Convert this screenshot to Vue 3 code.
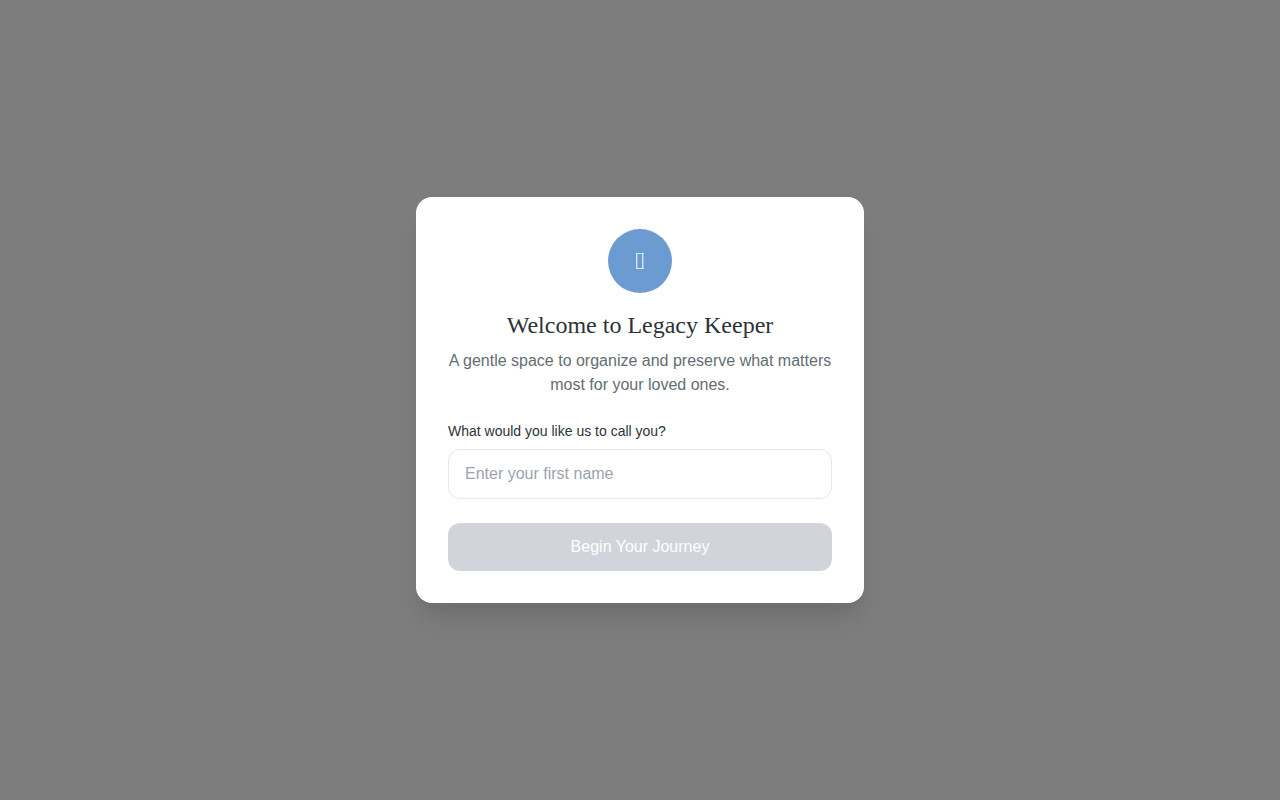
<script setup>
import { ref } from 'vue'

const name = ref('')
</script>

<template>
  <div class="overlay">
    <main class="card">
      <header class="intro">
        <div class="badge">
          <svg class="glyph" viewBox="0 0 24 24" aria-hidden="true">
            <path d="M8 4h8v1H8zM8 19h8v1H8z" fill="#ffffff" fill-opacity="0.75" />
            <path d="M8 5h1v14H8zM14 5h1v14h-1z" fill="#ffffff" fill-opacity="0.7" />
            <path d="M9 5h1v14H9zM15 5h1v14h-1z" fill="#ffffff" fill-opacity="0.3" />
          </svg>
        </div>
        <h1>Welcome to Legacy Keeper</h1>
        <p>A gentle space to organize and preserve what matters most for your loved ones.</p>
      </header>
      <form class="form" @submit.prevent>
        <div class="field">
          <label for="first-name">What would you like us to call you?</label>
          <input id="first-name" v-model="name" type="text" placeholder="Enter your first name" />
        </div>
        <button type="submit" :disabled="!name.trim()">Begin Your Journey</button>
      </form>
    </main>
  </div>
</template>

<style>
body {
  margin: 0;
  background: #ffffff;
}
</style>

<style scoped>
* {
  box-sizing: border-box;
}
.overlay {
  min-height: 100vh;
  display: flex;
  align-items: center;
  justify-content: center;
  padding: 16px;
  background: #7d7d7d;
  font-family: "Liberation Sans", Arial, sans-serif;
  font-size: 16px;
  line-height: 24px;
}
.card {
  width: 100%;
  max-width: 448px;
  padding: 32px;
  border-radius: 16px;
  background: #ffffff;
  box-shadow: 0 20px 25px -5px rgba(0, 0, 0, 0.1), 0 10px 10px -5px rgba(0, 0, 0, 0.04);
}
.intro {
  text-align: center;
  margin-bottom: 24px;
}
.badge {
  width: 64px;
  height: 64px;
  margin: 0 auto 16px;
  border-radius: 50%;
  background: #6b9bd1;
  display: flex;
  align-items: center;
  justify-content: center;
}
.glyph {
  width: 24px;
  height: 24px;
}
h1 {
  margin: 0 0 8px;
  font-family: "Liberation Serif", "Times New Roman", serif;
  font-size: 24px;
  line-height: 32px;
  font-weight: 400;
  color: #2d3436;
}
p {
  margin: 0;
  color: #636e72;
}
.form {
  display: flex;
  flex-direction: column;
  gap: 24px;
}
.field {
  display: flex;
  flex-direction: column;
  gap: 8px;
}
label {
  font-size: 14px;
  line-height: 20px;
  color: #2d3436;
}
input {
  width: 100%;
  padding: 12px 16px;
  border: 1px solid #e5e7eb;
  border-radius: 12px;
  background: #ffffff;
  color: #2d3436;
  font: inherit;
  outline: none;
}
input:focus {
  border-color: #6b9bd1;
}
input::placeholder {
  color: #9ca3af;
  opacity: 1;
}
button {
  width: 100%;
  padding: 12px 16px;
  border: 0;
  border-radius: 12px;
  background: #6b9bd1;
  color: #ffffff;
  font: inherit;
  cursor: pointer;
}
button:disabled {
  background: #d1d5db;
  cursor: not-allowed;
}
</style>
